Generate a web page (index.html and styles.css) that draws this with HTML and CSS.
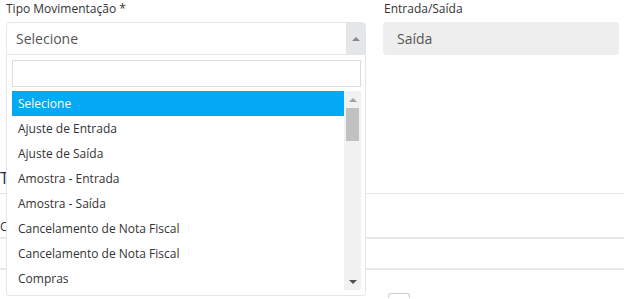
FILE: index.html
```html
<!DOCTYPE html>
<html lang="pt-BR">
<head>
  <meta charset="UTF-8" />
  <meta name="viewport" content="width=device-width, initial-scale=1.0" />
  <title>Movimentação de Estoque</title>
  <link rel="stylesheet" href="styles.css">
</head>
<body>

<!-- linha do formulário -->
<div class="form-row">
  <div class="field field-tipo">
    <label>Tipo Movimentação *</label>
    <div class="select">
      <span class="select-text">Selecione</span>
      <span class="select-arrow"><i class="tri-up"></i></span>
    </div>

    <!-- dropdown aberto (select2) -->
    <div class="dropdown">
      <input class="dropdown-search" type="text">
      <div class="dropdown-list">
        <ul class="options">
          <li class="active">Selecione</li>
          <li>Ajuste de Entrada</li>
          <li>Ajuste de Saída</li>
          <li>Amostra - Entrada</li>
          <li>Amostra - Saída</li>
          <li>Cancelamento de Nota Fiscal</li>
          <li>Cancelamento de Nota Fiscal</li>
          <li>Compras</li>
        </ul>
        <div class="scrollbar">
          <div class="sb-btn"><i class="sb-up"></i></div>
          <div class="sb-thumb"></div>
          <div class="sb-space"></div>
          <div class="sb-btn"><i class="sb-down"></i></div>
        </div>
      </div>
    </div>
  </div>

  <div class="field field-es">
    <label>Entrada/Saída</label>
    <div class="input-disabled">Saída</div>
  </div>
</div>

<!-- conteúdo por trás do dropdown -->
<div class="content">
  <h3 class="section-title">Transporte</h3>
  <label class="small-label">CFOP:</label>
  <div class="input-line"></div>
  <div class="check-row">
    <span class="checkbox"></span>
  </div>
</div>

</body>
</html>
```

FILE: styles.css
```css
html, body {
  margin: 0;
  padding: 0;
  height: 299px;
  overflow: hidden;
  font-family: "Open Sans", "Liberation Sans", sans-serif;
  color: #333;
  background: #fff;
}
*, *::before, *::after {
  box-sizing: border-box;
}
.form-row {
  display: flex;
  gap: 17px;
  padding: 0 5px 0 6px;
  position: relative;
  z-index: 2;
}
.field label {
  display: block;
  font-size: 12px;
  line-height: 18px;
  margin-bottom: 4px;
}
.field-tipo {
  width: 360px;
  position: relative;
}
.field-es {
  flex: 1;
}
.field-es label {
  padding-left: 1px;
}
.select {
  display: flex;
  height: 33px;
  border: 1px solid #e5e6e7;
  border-radius: 4px 4px 0 0;
  background: #fff;
}
.select-text {
  flex: 1;
  padding-left: 9px;
  line-height: 31px;
  font-size: 14px;
  color: #555;
}
.select-arrow {
  width: 19px;
  background: #e5e6e7;
  display: flex;
  align-items: center;
  justify-content: center;
}
.tri-up {
  display: block;
  width: 0;
  height: 0;
  border-left: 4px solid transparent;
  border-right: 4px solid transparent;
  border-bottom: 4px solid #888;
}
.dropdown {
  position: absolute;
  left: 0;
  top: 55px;
  width: 360px;
  height: 241px;
  padding: 5px 4px 5px 5px;
  border: 1px solid #e5e6e7;
  border-top: none;
  border-radius: 0 0 4px 4px;
  background: #fff;
}
.dropdown-search {
  display: block;
  width: 100%;
  height: 27px;
  margin: 0;
  border: 1px solid #ddd;
  outline: none;
  background: #fff;
}
.dropdown-list {
  display: flex;
  height: 199px;
  margin-top: 4px;
}
.options {
  flex: 1;
  margin: 0;
  padding: 0;
  list-style: none;
  overflow: hidden;
}
.options li {
  height: 25px;
  line-height: 25px;
  padding-left: 6px;
  font-size: 12px;
  color: #333;
  white-space: nowrap;
}
.options li.active {
  background: #03a9f4;
  color: #fff;
}
.scrollbar {
  width: 17px;
  display: flex;
  flex-direction: column;
  background: #f1f1f1;
}
.sb-btn {
  height: 17px;
  display: flex;
  align-items: center;
  justify-content: center;
}
.sb-up, .sb-down {
  display: block;
  width: 0;
  height: 0;
  border-left: 4px solid transparent;
  border-right: 4px solid transparent;
}
.sb-up {
  border-bottom: 4px solid #a3a3a3;
}
.sb-down {
  border-top: 4px solid #505050;
}
.sb-thumb {
  height: 33px;
  margin: 0 2px;
  background: #c1c1c1;
}
.sb-space {
  flex: 1;
}
.input-disabled {
  height: 33px;
  line-height: 33px;
  padding-left: 14px;
  font-size: 14px;
  color: #555;
  background: #eee;
  border-radius: 3px;
}
.content {
  padding-top: 113px;
}
.section-title {
  margin: 0;
  font-size: 16px;
  font-weight: 400;
  line-height: 20px;
  color: #1f2d4d;
  padding-bottom: 5px;
  border-bottom: 1px solid #e6e6e6;
}
.small-label {
  display: block;
  margin-top: 24px;
  font-size: 12px;
  line-height: 18px;
  color: #333;
}
.input-line {
  height: 33px;
  margin-top: 1px;
  border-top: 2px solid #e5e8eb;
  border-bottom: 2px solid #e5e8eb;
}
.check-row {
  padding: 23px 0 0 388px;
}
.checkbox {
  display: block;
  width: 22px;
  height: 5px;
  border: 1px solid #ccc;
  border-bottom: none;
  border-radius: 3px 3px 0 0;
}
```
